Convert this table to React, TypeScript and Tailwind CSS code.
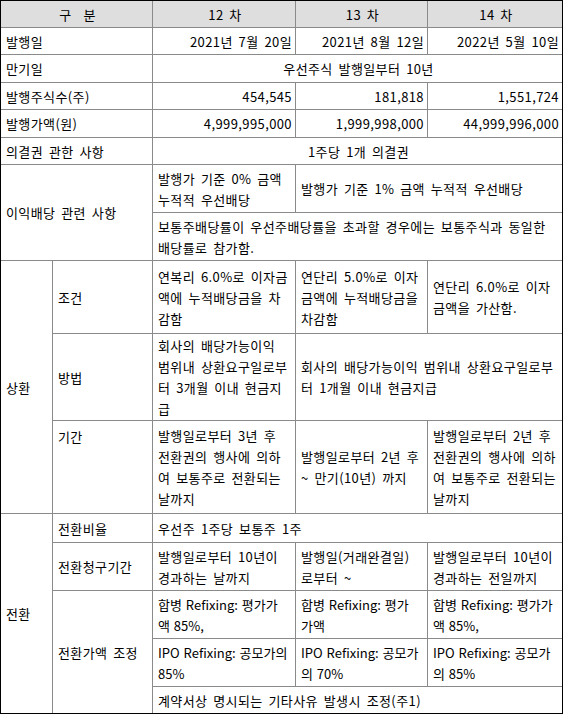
import type { ReactNode, TdHTMLAttributes } from "react";

type CellProps = TdHTMLAttributes<HTMLTableCellElement> & { children?: ReactNode; className?: string };

// every cell draws only its left and top line; the frame's black border closes the right and bottom
const Cell = ({ children, className = "", ...rest }: CellProps) => (
  <td
    className={`border-l border-t border-[#8a8a8a] pl-[5px] pr-[3px] py-0 align-middle whitespace-nowrap ${className}`}
    {...rest}
  >
    {children}
  </td>
);

const Lines = ({ items }: { items: string[] }) => (
  <>
    {items.map((t, i) => (
      <div key={i}>{t}</div>
    ))}
  </>
);

// latin words in the refixing rows are narrow in the original, so no extra spacing there
const latin = "tracking-normal [word-spacing:1px]";

export default function App() {
  return (
    <div className="bg-white">
      <div className="w-[563px] h-[714px] overflow-hidden border border-black">
        <table
          className="-ml-px -mt-px w-[562px] table-fixed border-separate border-spacing-0 text-[13px] leading-[21px] tracking-[0.4px] [word-spacing:2.5px] text-black"
          style={{ fontFamily: '"Noto Sans CJK KR", "Noto Sans", sans-serif' }}
        >
          <colgroup>
            <col className="w-[52px]" />
            <col className="w-[100px]" />
            <col className="w-[143px]" />
            <col className="w-[132px]" />
            <col className="w-[135px]" />
          </colgroup>
          <tbody>
            <tr className="h-[27px] bg-[#dedede]">
              <Cell colSpan={2} className="text-center">
                구<span className="inline-block w-[12px]" />분
              </Cell>
              <Cell className="text-center">12 차</Cell>
              <Cell className="text-center">13 차</Cell>
              <Cell className="text-center">14 차</Cell>
            </tr>
            <tr className="h-[27px]">
              <Cell colSpan={2}>발행일</Cell>
              <Cell className="text-right">2021년 7월 20일</Cell>
              <Cell className="text-right">2021년 8월 12일</Cell>
              <Cell className="text-right">2022년 5월 10일</Cell>
            </tr>
            <tr className="h-[28px]">
              <Cell colSpan={2}>만기일</Cell>
              <Cell colSpan={3} className="text-center">우선주식 발행일부터 10년</Cell>
            </tr>
            <tr className="h-[27px]">
              <Cell colSpan={2}>발행주식수(주)</Cell>
              <Cell className="text-right">454,545</Cell>
              <Cell className="text-right">181,818</Cell>
              <Cell className="text-right">1,551,724</Cell>
            </tr>
            <tr className="h-[28px]">
              <Cell colSpan={2}>발행가액(원)</Cell>
              <Cell className="text-right">4,999,995,000</Cell>
              <Cell className="text-right">1,999,998,000</Cell>
              <Cell className="text-right">44,999,996,000</Cell>
            </tr>
            <tr className="h-[27px]">
              <Cell colSpan={2}>의결권 관한 사항</Cell>
              <Cell colSpan={3} className="text-center">1주당 1개 의결권</Cell>
            </tr>

            {/* 이익배당 */}
            <tr className="h-[48px]">
              <Cell colSpan={2} rowSpan={2}>이익배당 관련 사항</Cell>
              <Cell>
                <Lines items={["발행가 기준 0% 금액", "누적적 우선배당"]} />
              </Cell>
              <Cell colSpan={2}>발행가 기준 1% 금액 누적적 우선배당</Cell>
            </tr>
            <tr className="h-[48px]">
              <Cell colSpan={3}>
                <Lines items={["보통주배당률이 우선주배당률을 초과할 경우에는 보통주식과 동일한", "배당률로 참가함."]} />
              </Cell>
            </tr>

            {/* 상환 */}
            <tr className="h-[73px]">
              <Cell rowSpan={3}>상환</Cell>
              <Cell>조건</Cell>
              <Cell>
                <Lines items={["연복리 6.0%로 이자금", "액에 누적배당금을 차", "감함"]} />
              </Cell>
              <Cell>
                <Lines items={["연단리 5.0%로 이자", "금액에 누적배당금을", "차감함"]} />
              </Cell>
              <Cell>
                <Lines items={["연단리 6.0%로 이자", "금액을 가산함."]} />
              </Cell>
            </tr>
            <tr className="h-[87px]">
              <Cell>방법</Cell>
              <Cell>
                <Lines items={["회사의 배당가능이익", "범위내 상환요구일로부", "터 3개월 이내 현금지", "급"]} />
              </Cell>
              <Cell colSpan={2}>
                <Lines items={["회사의 배당가능이익 범위내 상환요구일로부", "터 1개월 이내 현금지급"]} />
              </Cell>
            </tr>
            <tr className="h-[93px]">
              <Cell className="!align-top pt-[5px]">기간</Cell>
              <Cell>
                <Lines items={["발행일로부터 3년 후", "전환권의 행사에 의하", "여 보통주로 전환되는", "날까지"]} />
              </Cell>
              <Cell>
                <Lines items={["발행일로부터 2년 후", "~ 만기(10년) 까지"]} />
              </Cell>
              <Cell>
                <Lines items={["발행일로부터 2년 후", "전환권의 행사에 의하", "여 보통주로 전환되는", "날까지"]} />
              </Cell>
            </tr>

            {/* 전환 */}
            <tr className="h-[29px]">
              <Cell rowSpan={5}>전환</Cell>
              <Cell>전환비율</Cell>
              <Cell colSpan={3}>우선주 1주당 보통주 1주</Cell>
            </tr>
            <tr className="h-[48px]">
              <Cell>전환청구기간</Cell>
              <Cell>
                <Lines items={["발행일로부터 10년이", "경과하는 날까지"]} />
              </Cell>
              <Cell>
                <Lines items={["발행일(거래완결일)", "로부터 ~"]} />
              </Cell>
              <Cell>
                <Lines items={["발행일로부터 10년이", "경과하는 전일까지"]} />
              </Cell>
            </tr>
            <tr className="h-[48px]">
              <Cell rowSpan={3}>전환가액 조정</Cell>
              <Cell className={latin}>
                <Lines items={["합병 Refixing: 평가가", "액 85%,"]} />
              </Cell>
              <Cell className={latin}>
                <Lines items={["합병 Refixing: 평가", "가액"]} />
              </Cell>
              <Cell className={latin}>
                <Lines items={["합병 Refixing: 평가가", "액 85%,"]} />
              </Cell>
            </tr>
            <tr className="h-[48px]">
              <Cell className={latin}>
                <Lines items={["IPO Refixing: 공모가의", "85%"]} />
              </Cell>
              <Cell className={latin}>
                <Lines items={["IPO Refixing: 공모가", "의 70%"]} />
              </Cell>
              <Cell className={latin}>
                <Lines items={["IPO Refixing: 공모가", "의 85%"]} />
              </Cell>
            </tr>
            <tr className="h-[27px]">
              <Cell colSpan={3}>계약서상 명시되는 기타사유 발생시 조정(주1)</Cell>
            </tr>
          </tbody>
        </table>
      </div>
    </div>
  );
}
